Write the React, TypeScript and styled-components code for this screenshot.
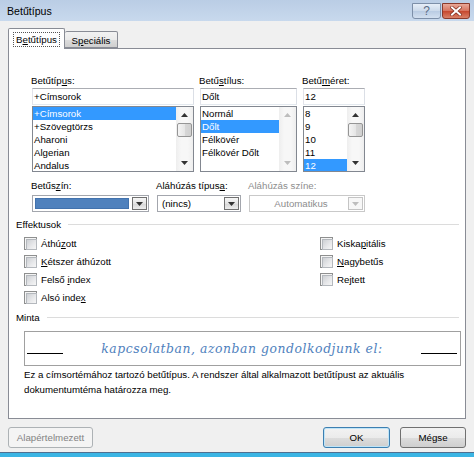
import React from "react";
import styled, { createGlobalStyle, css } from "styled-components";

const GlobalStyle = createGlobalStyle`
  html, body {
    margin: 0;
    padding: 0;
    background: #f0f0f0;
  }
  body {
    font-family: "Liberation Sans", Arial, sans-serif;
    font-size: 9.7px;
    color: #000;
  }
  * {
    box-sizing: border-box;
  }
  u {
    text-underline-offset: 1px;
  }
`;

const Window = styled.div`
  width: 474px;
  height: 457px;
  display: flex;
  flex-direction: column;
  background: #f0f0f0;
  overflow: hidden;
`;

const TitleBar = styled.div`
  height: 21px;
  flex: none;
  display: flex;
  justify-content: space-between;
  padding: 0 4px 0 7px;
  background: linear-gradient(#bacde5, #c8d9ed);
`;

const Title = styled.div`
  font-size: 10.6px;
  line-height: 22px;
`;

const Caption = styled.div`
  display: flex;
  margin-top: 3px;
  height: 16px;
`;

const CaptionButton = styled.div<{ $close?: boolean }>`
  width: 29px;
  height: 16px;
  display: flex;
  align-items: center;
  justify-content: center;
  border: 1px solid #7d8fa8;
  border-radius: 0 0 3px 3px;
  color: #5a6b84;
  font-size: 12px;
  background: linear-gradient(#e6eef8, #cbd9ea 50%, #b9cbe2 51%, #d3e0f0);
  ${({ $close }) =>
    $close &&
    css`
      width: 28px;
      margin-left: 1px;
      border-color: #8a3a2c;
      background: linear-gradient(#e9a898, #d6735e 50%, #c6472e 51%, #d98168);
    `}
`;

const Body = styled.div`
  flex: 1;
  display: flex;
  flex-direction: column;
  padding: 7px 8px 0 8px;
`;

const TabStrip = styled.div`
  height: 21px;
  display: flex;
  align-items: flex-end;
  margin-bottom: -1px;
  position: relative;
  z-index: 1;
`;

const Tab = styled.div<{ $active?: boolean }>`
  display: flex;
  align-items: center;
  justify-content: center;
  border: 1px solid #898c95;
  border-radius: 2px 2px 0 0;
  ${({ $active }) =>
    $active
      ? css`
          width: 57px;
          height: 21px;
          border-bottom: none;
          background: #fff;
        `
      : css`
          width: 53px;
          height: 17px;
          margin-bottom: 1px;
          border-left: none;
          padding-top: 1px;
          background: linear-gradient(#f2f2f2, #ebebeb 50%, #dddddd 51%, #cfcfcf);
        `}
`;

const FocusRect = styled.span`
  border: 1px dotted #555;
  padding: 1px 2px;
  line-height: 11px;
`;

const Panel = styled.div`
  height: 371px;
  flex: none;
  border: 1px solid #898c95;
  background: #fff;
  padding: 25px 4px 0 7px;
  display: flex;
  flex-direction: column;
`;

const FontGrid = styled.div`
  display: grid;
  grid-template-columns: 162px 97px 62px;
  column-gap: 6px;
  margin-left: 16px;
`;

const Column = styled.div`
  display: flex;
  flex-direction: column;
`;

const Label = styled.div<{ $disabled?: boolean }>`
  line-height: 13px;
  height: 14px;
  padding-left: 0;
  margin-left: -1px;
  white-space: nowrap;
  color: ${({ $disabled }) => ($disabled ? "#8d8d8d" : "#000")};
`;

const TextBox = styled.div`
  height: 17px;
  border: 1px solid;
  border-color: #abadb3 #dbdfe6 #e3e9ef #e2e3ea;
  padding-left: 1px;
  line-height: 15px;
  background: #fff;
`;

const ListBox = styled.div`
  height: 66px;
  margin-top: 1px;
  border: 1px solid #828790;
  background: #fff;
  display: flex;
`;

const Items = styled.div`
  flex: 1;
  overflow: hidden;
`;

const Item = styled.div<{ $selected?: boolean }>`
  height: 13px;
  line-height: 13px;
  padding-left: 1px;
  white-space: nowrap;
  ${({ $selected }) =>
    $selected &&
    css`
      background: #3399ff;
      color: #fff;
    `}
`;

const ScrollBar = styled.div`
  width: 17px;
  flex: none;
  display: flex;
  flex-direction: column;
  background: linear-gradient(90deg, #eeeeee, #f7f7f7 30%, #f7f7f7 70%, #eeeeee);
`;

const ScrollArrow = styled.div`
  height: 16px;
  flex: none;
  display: flex;
  align-items: center;
  justify-content: center;
`;

const ScrollSpace = styled.div`
  flex: 1;
`;

const Thumb = styled.div`
  height: 14px;
  margin: 0 1px;
  border: 1px solid #959595;
  border-radius: 2px;
  background: linear-gradient(90deg, #f4f4f4, #e6e6e6 50%, #d7d7d7 51%, #d0d0d0);
`;

const ComboRow = styled.div`
  display: flex;
  column-gap: 8px;
  margin: 7px 0 0 16px;
`;

const ComboField = styled.div<{ $w: number }>`
  width: ${({ $w }) => $w}px;
  display: flex;
  flex-direction: column;
`;

const Combo = styled.div<{ $disabled?: boolean }>`
  height: 17px;
  margin-top: 2px;
  display: flex;
  align-items: center;
  padding: 1px 1px 1px 2px;
  border: 1px solid ${({ $disabled }) => ($disabled ? "#c9c9c9" : "#a3a6ad")};
  background: #fff;
  color: ${({ $disabled }) => ($disabled ? "#8d8d8d" : "#000")};
`;

const ComboText = styled.div<{ $center?: boolean }>`
  flex: 1;
  padding-left: 2px;
  line-height: 13px;
  text-align: ${({ $center }) => ($center ? "center" : "left")};
`;

const Swatch = styled.div`
  flex: 1;
  height: 11px;
  margin-right: 3px;
  background: #4f81bd;
  border: 1px solid #4272ad;
`;

const DropButton = styled.div<{ $disabled?: boolean }>`
  width: 15px;
  height: 13px;
  flex: none;
  display: flex;
  align-items: center;
  justify-content: center;
  border: 1px solid ${({ $disabled }) => ($disabled ? "#c4c4c4" : "#707070")};
  background: ${({ $disabled }) =>
    $disabled ? "#f7f7f7" : "linear-gradient(#f6f6f6, #e3e3e3 50%, #d6d6d6 51%, #ececec)"};
`;

const SectionHeader = styled.div`
  display: flex;
  align-items: center;
  column-gap: 7px;
  line-height: 13px;
  padding-right: 2px;
  &::after {
    content: "";
    flex: 1;
    height: 1px;
    background: #dcdcdc;
  }
`;

const EffectsGrid = styled.div`
  display: grid;
  grid-template-columns: 296px 1fr;
  grid-auto-rows: 18px;
  grid-auto-flow: column;
  grid-template-rows: repeat(4, 18px);
  margin: 3px 0 0 8px;
`;

const CheckRow = styled.label`
  display: flex;
  align-items: center;
  column-gap: 4px;
  white-space: nowrap;
`;

const CheckBox = styled.span`
  width: 13px;
  height: 13px;
  flex: none;
  border: 1px solid #8e8f8f;
  padding: 1px;
  background: #f4f4f4;
  &::before {
    content: "";
    display: block;
    width: 9px;
    height: 9px;
    border: 1px solid #b4b8bd;
    background: linear-gradient(135deg, #cdd0d4, #e8e9eb 60%, #f6f6f6);
  }
`;

const Preview = styled.div`
  height: 35px;
  margin: 7px 0 0 8px;
  border: 1px solid #a0a0a0;
  background: #fff;
  display: flex;
  align-items: center;
  justify-content: space-between;
  padding: 0 3px 0 2px;
`;

const PreviewLine = styled.div`
  width: 36px;
  height: 1px;
  margin-top: 9px;
  background: #000;
`;

const PreviewText = styled.div`
  font-family: "DejaVu Serif", "Liberation Serif", serif;
  font-style: italic;
  font-size: 12.4px;
  letter-spacing: 0.55px;
  color: #4f81bd;
`;

const Note = styled.div`
  margin: 1px 0 0 8px;
  line-height: 15px;
`;

const ButtonRow = styled.div`
  display: flex;
  column-gap: 10px;
  margin-top: 8px;
`;

const Button = styled.div<{ $default?: boolean; $disabled?: boolean; $w: number }>`
  width: ${({ $w }) => $w}px;
  height: 21px;
  display: flex;
  align-items: center;
  justify-content: center;
  border: 1px solid #707070;
  border-radius: 3px;
  background: linear-gradient(#f2f2f2, #ebebeb 50%, #dddddd 51%, #cfcfcf);
  ${({ $default }) =>
    $default &&
    css`
      border-color: #3c7fb1;
      box-shadow: inset 0 0 0 1px #bfe4f7;
    `}
  ${({ $disabled }) =>
    $disabled &&
    css`
      border-color: #adb2b5;
      background: #f4f4f4;
      color: #838383;
    `}
`;

const Spacer = styled.div`
  flex: 1;
`;

const BottomFrame = styled.div`
  height: 5px;
  flex: none;
  margin-top: auto;
  border-top: 1px solid #4f6f90;
  background: #3bb5e4;
`;

const Arrow = ({ up, disabled }: { up?: boolean; disabled?: boolean }) => (
  <svg width="7" height="4" viewBox="0 0 7 4">
    <path
      d={up ? "M0 4 L3.5 0 L7 4 Z" : "M0 0 L7 0 L3.5 4 Z"}
      fill={disabled ? "#bdbdbd" : "#333"}
    />
  </svg>
);

const CloseGlyph = () => (
  <svg width="12" height="10" viewBox="0 0 12 10">
    <path d="M2 1.5 L10 8.5 M10 1.5 L2 8.5" stroke="#7a2a1c" strokeWidth="3.4" strokeLinecap="square" />
    <path d="M2 1.5 L10 8.5 M10 1.5 L2 8.5" stroke="#fff" strokeWidth="2" strokeLinecap="square" />
  </svg>
);

const Scroll = ({ thumb, disabled }: { thumb?: boolean; disabled?: boolean }) => (
  <ScrollBar>
    <ScrollArrow>
      <Arrow up disabled={disabled} />
    </ScrollArrow>
    {thumb && <Thumb />}
    <ScrollSpace />
    <ScrollArrow>
      <Arrow disabled={disabled} />
    </ScrollArrow>
  </ScrollBar>
);

const Check = ({ children }: { children: React.ReactNode }) => (
  <CheckRow>
    <CheckBox />
    <span>{children}</span>
  </CheckRow>
);

const fonts = ["+Címsorok", "+Szövegtörzs", "Aharoni", "Algerian", "Andalus"];
const styles = ["Normál", "Dőlt", "Félkövér", "Félkövér Dőlt"];
const sizes = ["8", "9", "10", "11", "12"];

export default function App() {
  return (
    <>
      <GlobalStyle />
      <Window>
        <TitleBar>
          <Title>Betűtípus</Title>
          <Caption>
            <CaptionButton>?</CaptionButton>
            <CaptionButton $close>
              <CloseGlyph />
            </CaptionButton>
          </Caption>
        </TitleBar>
        <Body>
          <TabStrip>
            <Tab $active>
              <FocusRect>
                B<u>e</u>tűtípus
              </FocusRect>
            </Tab>
            <Tab>
              S<u>p</u>eciális
            </Tab>
          </TabStrip>
          <Panel>
            <FontGrid>
              <Column>
                <Label>
                  Betűtíp<u>u</u>s:
                </Label>
                <TextBox>+Címsorok</TextBox>
                <ListBox>
                  <Items>
                    {fonts.map((f, i) => (
                      <Item key={f} $selected={i === 0}>
                        {f}
                      </Item>
                    ))}
                  </Items>
                  <Scroll thumb />
                </ListBox>
              </Column>
              <Column>
                <Label>
                  Betű<u>s</u>tílus:
                </Label>
                <TextBox>Dőlt</TextBox>
                <ListBox>
                  <Items>
                    {styles.map((s, i) => (
                      <Item key={s} $selected={i === 1}>
                        {s}
                      </Item>
                    ))}
                  </Items>
                  <Scroll disabled />
                </ListBox>
              </Column>
              <Column>
                <Label>
                  Betű<u>m</u>éret:
                </Label>
                <TextBox>12</TextBox>
                <ListBox>
                  <Items>
                    {sizes.map((s, i) => (
                      <Item key={s} $selected={i === 4}>
                        {s}
                      </Item>
                    ))}
                  </Items>
                  <Scroll thumb />
                </ListBox>
              </Column>
            </FontGrid>

            <ComboRow>
              <ComboField $w={117}>
                <Label>
                  Betűs<u>z</u>ín:
                </Label>
                <Combo>
                  <Swatch />
                  <DropButton>
                    <Arrow />
                  </DropButton>
                </Combo>
              </ComboField>
              <ComboField $w={84}>
                <Label>
                  Aláhúzás típus<u>a</u>:
                </Label>
                <Combo>
                  <ComboText>(nincs)</ComboText>
                  <DropButton>
                    <Arrow />
                  </DropButton>
                </Combo>
              </ComboField>
              <ComboField $w={116}>
                <Label $disabled>Aláhúzás színe:</Label>
                <Combo $disabled>
                  <ComboText $center>Automatikus</ComboText>
                  <DropButton $disabled>
                    <Arrow disabled />
                  </DropButton>
                </Combo>
              </ComboField>
            </ComboRow>

            <SectionHeader style={{ marginTop: 6 }}>Effektusok</SectionHeader>
            <EffectsGrid>
              <Check>
                Áthú<u>z</u>ott
              </Check>
              <Check>
                <u>K</u>étszer áthúzott
              </Check>
              <Check>
                Felső <u>i</u>ndex
              </Check>
              <Check>
                Alsó inde<u>x</u>
              </Check>
              <Check>
                Kiska<u>p</u>itális
              </Check>
              <Check>
                <u>N</u>agybetűs
              </Check>
              <Check>
                Re<u>j</u>tett
              </Check>
            </EffectsGrid>

            <SectionHeader style={{ marginTop: 5 }}>Minta</SectionHeader>
            <Preview>
              <PreviewLine />
              <PreviewText>kapcsolatban, azonban gondolkodjunk el:</PreviewText>
              <PreviewLine />
            </Preview>
            <Note>
              Ez a címsortémához tartozó betűtípus. A rendszer által alkalmazott betűtípust az aktuális
              <br />
              dokumentumtéma határozza meg.
            </Note>
          </Panel>
          <ButtonRow>
            <Button $w={85} $disabled>
              Alapértelmezett
            </Button>
            <Spacer />
            <Button $w={67} $default>
              OK
            </Button>
            <Button $w={66}>Mégse</Button>
          </ButtonRow>
        </Body>
        <BottomFrame />
      </Window>
    </>
  );
}
